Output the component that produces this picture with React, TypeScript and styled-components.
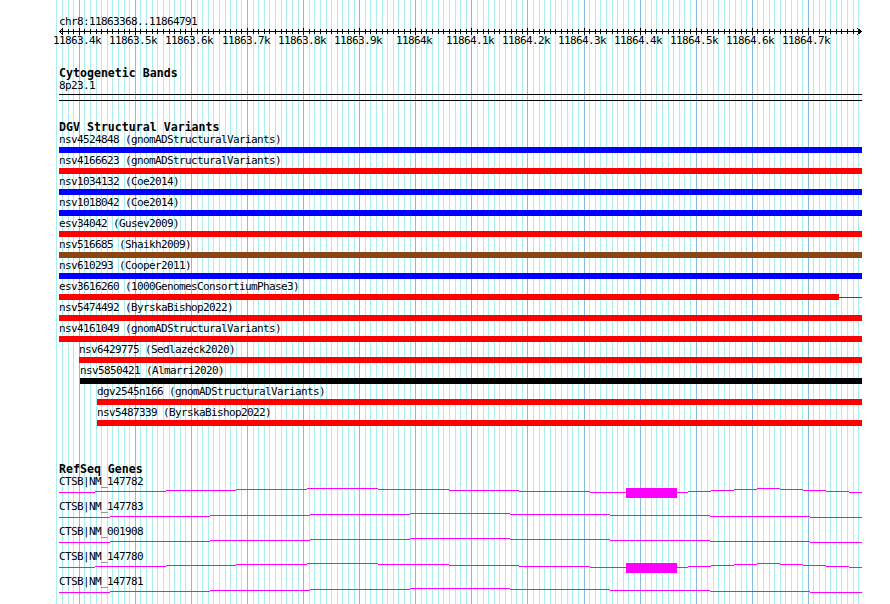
import React from 'react';
import styled, { createGlobalStyle } from 'styled-components';

const GlobalStyle = createGlobalStyle`
  html, body {
    margin: 0;
    padding: 0;
    background: #ffffff;
  }
  body {
    font-family: 'DejaVu Sans Mono', 'Liberation Mono', monospace;
    color: #000000;
  }
`;

// view geometry (pixels)
const ORIGIN = 59;
const TRACK_W = 803;
const MAJOR0 = 79.3;
const STEP = 5.608;

const gridCols = Array.from({ length: 144 }, (_, i) => i - 4).map((k) => ({
  k,
  x: Math.floor(MAJOR0 + STEP * k),
}));

const Page = styled.div`
  position: relative;
  width: 890px;
  height: 604px;
  overflow: hidden;
  background: #ffffff;
`;

const GridLayer = styled.svg`
  position: absolute;
  top: 0;
  left: 0;
  z-index: 0;
`;

const Tracks = styled.div`
  position: relative;
  z-index: 1;
  padding: 16px 0 0 ${ORIGIN}px;
  display: flex;
  flex-direction: column;
`;

const Label = styled.div`
  font-size: 11px;
  letter-spacing: -0.62px;
  line-height: 12px;
  height: 12px;
  white-space: pre;
`;

const Title = styled.div`
  font-size: 11.6px;
  font-weight: 700;
  line-height: 13px;
  height: 13px;
  white-space: pre;
`;

const Section = styled.section<{ $gap: number }>`
  margin-top: ${(p) => p.$gap}px;
  display: flex;
  flex-direction: column;
`;

const RulerSvg = styled.svg`
  display: block;
`;

const RulerLabels = styled.div`
  position: relative;
  height: 12px;
`;

const TickLabel = styled(Label)`
  position: absolute;
  top: 0;
`;

const Ideogram = styled.div`
  margin-top: 2px;
  display: flex;
  flex-direction: column;
  gap: 5px;
`;

const ChromLine = styled.div`
  width: ${TRACK_W}px;
  height: 1px;
  background: #000000;
`;

const VariantList = styled.div`
  display: flex;
  flex-direction: column;
  gap: 2px;
`;

const VariantRow = styled.div<{ $indent: number }>`
  margin-left: ${(p) => p.$indent}px;
  display: flex;
  flex-direction: column;
`;

const BarLine = styled.div`
  margin-top: 1px;
  height: 6px;
  display: flex;
  align-items: center;
`;

const Bar = styled.div<{ $color: string; $width: number }>`
  width: ${(p) => p.$width}px;
  height: 6px;
  flex-shrink: 0;
  background: ${(p) => p.$color};
`;

const Tail = styled.div<{ $color: string; $width: number }>`
  width: ${(p) => p.$width}px;
  height: 1px;
  background: ${(p) => p.$color};
`;

const GeneRow = styled.div`
  display: flex;
  flex-direction: column;
`;

const GeneSvg = styled.svg`
  display: block;
`;

type Variant = {
  name: string;
  color: string;
  start: number;
  end: number;
  tail?: number;
};

const BLUE = '#0000ff';
const RED = '#ff0000';
const BROWN = '#8b4513';

const variants: Variant[] = [
  { name: 'nsv4524848 (gnomADStructuralVariants)', color: BLUE, start: 59, end: 862 },
  { name: 'nsv4166623 (gnomADStructuralVariants)', color: RED, start: 59, end: 862 },
  { name: 'nsv1034132 (Coe2014)', color: BLUE, start: 59, end: 862 },
  { name: 'nsv1018042 (Coe2014)', color: BLUE, start: 59, end: 862 },
  { name: 'esv34042 (Gusev2009)', color: RED, start: 59, end: 862 },
  { name: 'nsv516685 (Shaikh2009)', color: BROWN, start: 59, end: 862 },
  { name: 'nsv610293 (Cooper2011)', color: BLUE, start: 59, end: 862 },
  { name: 'esv3616260 (1000GenomesConsortiumPhase3)', color: RED, start: 59, end: 839, tail: 862 },
  { name: 'nsv5474492 (ByrskaBishop2022)', color: RED, start: 59, end: 862 },
  { name: 'nsv4161049 (gnomADStructuralVariants)', color: RED, start: 59, end: 862 },
  { name: 'nsv6429775 (Sedlazeck2020)', color: RED, start: 79, end: 862 },
  { name: 'nsv5850421 (Almarri2020)', color: '#000000', start: 80, end: 862 },
  { name: 'dgv2545n166 (gnomADStructuralVariants)', color: RED, start: 97, end: 862 },
  { name: 'nsv5487339 (ByrskaBishop2022)', color: RED, start: 97, end: 862 },
];

// stepped intron lines: [x1, x2, level]
type Seg = [number, number, number];

const introns752: Seg[] = [
  [59, 95, 4], [95, 166, 3], [166, 236, 2], [236, 307, 1], [307, 378, 0],
  [378, 449, 1], [449, 519, 2], [519, 590, 3], [590, 626, 4],
  [677, 688, 4], [688, 711, 3], [711, 734, 2], [734, 757, 1], [757, 780, 0],
  [780, 803, 1], [803, 826, 2], [826, 849, 3], [849, 862, 4],
];

const intronsLong: Seg[] = [
  [59, 110, 4], [110, 210, 3], [210, 310, 2], [310, 410, 1], [410, 510, 0],
  [510, 610, 1], [610, 710, 2], [710, 810, 3], [810, 862, 4],
];

const genes = [
  { name: 'CTSB|NM_147782', segs: introns752, exon: [626, 677] },
  { name: 'CTSB|NM_147783', segs: intronsLong },
  { name: 'CTSB|NM_001908', segs: intronsLong },
  { name: 'CTSB|NM_147780', segs: introns752, exon: [626, 677] },
  { name: 'CTSB|NM_147781', segs: intronsLong },
];

const majorLabels = [
  '11863.4k', '11863.5k', '11863.6k', '11863.7k', '11863.8k', '11863.9k', '11864k',
  '11864.1k', '11864.2k', '11864.3k', '11864.4k', '11864.5k', '11864.6k', '11864.7k',
];

const Grid: React.FC = () => (
  <GridLayer width={890} height={604} shapeRendering="crispEdges">
    {gridCols.map(({ k, x }) => (
      <line
        key={k}
        x1={x + 0.5}
        x2={x + 0.5}
        y1={0}
        y2={604}
        stroke={k % 10 === 0 ? '#84bce8' : '#aaeeee'}
        strokeWidth={1}
      />
    ))}
  </GridLayer>
);

const Ruler: React.FC = () => (
  <>
    <Label>chr8:11863368..11864791</Label>
    <RulerSvg width={TRACK_W} height={7} shapeRendering="crispEdges">
      <line x1={0} x2={802} y1={3.5} y2={3.5} stroke="#000" />
      <polyline points="4,0 0.5,3.5 4,7" fill="none" stroke="#000" />
      <polyline points="798,0 802.5,3.5 798,7" fill="none" stroke="#000" />
      {gridCols
        .filter(({ k }) => k >= -3)
        .map(({ k, x }) => (
          <line
            key={k}
            x1={x - ORIGIN + 0.5}
            x2={x - ORIGIN + 0.5}
            y1={k % 10 === 0 ? 0 : 1}
            y2={k % 10 === 0 ? 7 : 6}
            stroke="#000"
          />
        ))}
    </RulerSvg>
    <RulerLabels>
      {majorLabels.map((text, i) => {
        const tick = MAJOR0 + STEP * 10 * i;
        return (
          <TickLabel key={text} style={{ left: Math.round(tick - ORIGIN - text.length * 3 - 2) }}>
            {text}
          </TickLabel>
        );
      })}
    </RulerLabels>
  </>
);

const App: React.FC = () => {
  return (
    <Page>
      <GlobalStyle />
      <Grid />
      <Tracks>
        <Ruler />

        <Section $gap={20}>
          <Title>Cytogenetic Bands</Title>
          <Label>8p23.1</Label>
          <Ideogram>
            <ChromLine />
            <ChromLine />
          </Ideogram>
        </Section>

        <Section $gap={20}>
          <Title>DGV Structural Variants</Title>
          <VariantList>
            {variants.map((v) => (
              <VariantRow key={v.name} $indent={v.start - ORIGIN}>
                <Label>{v.name}</Label>
                <BarLine>
                  <Bar $color={v.color} $width={v.end - v.start} />
                  {v.tail && <Tail $color={v.color} $width={v.tail - v.end} />}
                </BarLine>
              </VariantRow>
            ))}
          </VariantList>
        </Section>

        <Section $gap={37}>
          <Title>RefSeq Genes</Title>
          {genes.map((g) => (
            <GeneRow key={g.name}>
              <Label>{g.name}</Label>
              <GeneSvg width={TRACK_W} height={13} shapeRendering="crispEdges">
                {g.segs.map(([x1, x2, lvl]) => (
                  <rect key={x1} x={x1 - ORIGIN} y={lvl} width={x2 - x1} height={1} fill="#ff00ff" />
                ))}
                {g.exon && (
                  <rect x={g.exon[0] - ORIGIN} y={0} width={g.exon[1] - g.exon[0]} height={10} fill="#ff00ff" />
                )}
              </GeneSvg>
            </GeneRow>
          ))}
        </Section>
      </Tracks>
    </Page>
  );
};

export default App;
